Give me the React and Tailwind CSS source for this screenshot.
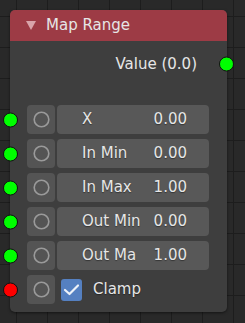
const rows = [
  { label: "X", value: "0.00", color: "green" },
  { label: "In Min", value: "0.00", color: "green" },
  { label: "In Max", value: "1.00", color: "green" },
  { label: "Out Min", value: "0.00", color: "green" },
  { label: "Out Ma", value: "1.00", color: "green" },
];

function Socket({ color, side }) {
  const fill = color === "red" ? "bg-[#ff0000]" : "bg-[#00ff00]";
  const pos = side === "right" ? "-right-[7px]" : "-left-[7px]";
  return (
    <span
      className={`absolute ${pos} top-1/2 -translate-y-1/2 w-[15px] h-[15px] rounded-full border border-[#111] ${fill}`}
    />
  );
}

function LinkButton() {
  return (
    <div className="w-[28px] h-[29px] rounded-[4px] bg-[#545454] flex items-center justify-center shrink-0">
      <svg width="17" height="17" viewBox="0 0 17 17">
        <circle cx="8.5" cy="8.5" r="7.3" fill="none" stroke="#9a9a9a" strokeWidth="1.6" />
      </svg>
    </div>
  );
}

export default function App() {
  return (
    <div
      className="w-[245px] h-[323px] pt-[10px] pl-[10px] bg-[#292929] bg-[linear-gradient(to_right,#1d1d1d_1px,transparent_1px),linear-gradient(to_bottom,#1d1d1d_1px,transparent_1px)] bg-[size:31px_31px] bg-[position:16px_16px] overflow-hidden"
      style={{ fontFamily: '"DejaVu Sans", sans-serif' }}
    >
      <div className="relative w-[217px] h-[302px] rounded-[5px] bg-[#3e3e3e] shadow-[0_1px_3px_rgba(0,0,0,0.5)] text-[15px] text-[#e6e6e6]">
        <div className="h-[31px] rounded-t-[5px] bg-[#9d3b45] flex items-center pl-[16px] gap-[10px]">
          <svg width="10" height="9" viewBox="0 0 10 9">
            <path d="M0 0 L10 0 L5 9 Z" fill="#d9a4aa" />
          </svg>
          <span className="leading-none">Map Range</span>
        </div>

        <div className="relative mt-[9px] h-[28px] flex items-center justify-end pr-[30px]">
          <span>Value (0.0)</span>
          <Socket color="green" side="right" />
        </div>

        <div className="mt-[27px] flex flex-col gap-[5px]">
          {rows.map((r) => (
            <div key={r.label} className="relative flex items-center pl-[17px] gap-[2px]">
              <Socket color={r.color} side="left" />
              <LinkButton />
              <div className="w-[152px] h-[29px] rounded-[4px] bg-[#585858] flex items-center justify-between pl-[25px] pr-[22px] [text-shadow:0_1px_1px_rgba(0,0,0,0.4)]">
                <span>{r.label}</span>
                <span>{r.value}</span>
              </div>
            </div>
          ))}
          <div className="relative flex items-center pl-[17px]">
            <Socket color="red" side="left" />
            <LinkButton />
            <div className="ml-[6px] w-[21px] h-[22px] rounded-[3px] bg-[#5580c1] flex items-center justify-center">
              <svg width="17" height="13" viewBox="0 0 17 13">
                <path d="M2 7 L6.5 11 L15 2.5" fill="none" stroke="#eef2f8" strokeWidth="2.2" strokeLinecap="round" strokeLinejoin="round" />
              </svg>
            </div>
            <span className="ml-[11px] [text-shadow:0_1px_1px_rgba(0,0,0,0.4)]">Clamp</span>
          </div>
        </div>
      </div>
    </div>
  );
}
